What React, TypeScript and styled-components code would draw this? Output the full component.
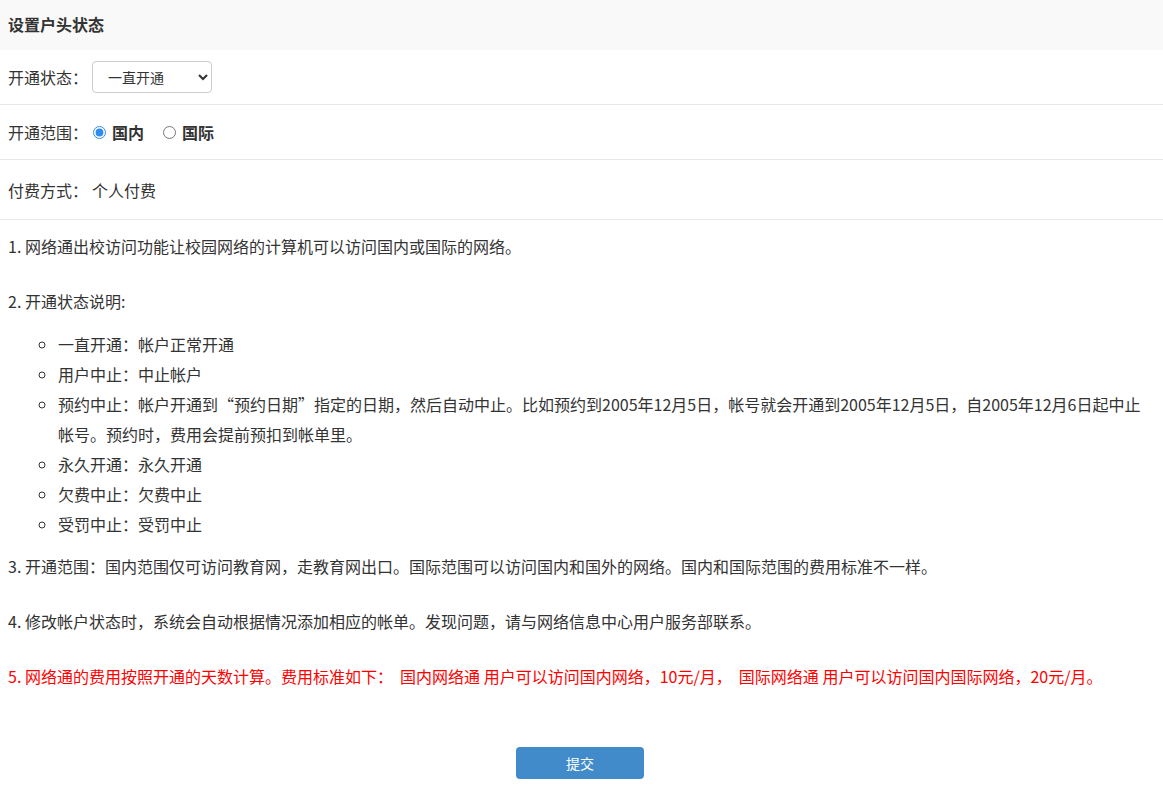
import * as React from 'react';
import styled, { createGlobalStyle } from 'styled-components';

const GlobalStyle = createGlobalStyle`
  html, body {
    margin: 0;
    padding: 0;
    background: #fff;
  }

  body {
    font-family: "Noto Sans CJK SC", "Noto Sans", sans-serif;
    font-size: 16px;
    color: #333;
  }
`;

const statusOptions = ['一直开通', '用户中止', '预约中止', '永久开通'];

const statusNotes = [
  '一直开通：帐户正常开通',
  '用户中止：中止帐户',
  '预约中止：帐户开通到“预约日期”指定的日期，然后自动中止。比如预约到2005年12月5日，帐号就会开通到2005年12月5日，自2005年12月6日起中止帐号。预约时，费用会提前预扣到帐单里。',
  '永久开通：永久开通',
  '欠费中止：欠费中止',
  '受罚中止：受罚中止',
];

const App: React.FC = () => {
  const [status, setStatus] = React.useState('一直开通');
  const [scope, setScope] = React.useState('domestic');

  return (
    <Page>
      <GlobalStyle />
      <Header>设置户头状态</Header>

      <FieldRow height={54}>
        <Label>开通状态：</Label>
        <Select value={status} onChange={(e) => setStatus(e.target.value)}>
          {statusOptions.map((opt) => (
            <option key={opt} value={opt}>
              {opt}
            </option>
          ))}
        </Select>
      </FieldRow>

      <FieldRow height={54}>
        <Label>开通范围：</Label>
        <RadioLabel>
          <Radio
            type="radio"
            name="scope"
            checked={scope === 'domestic'}
            onChange={() => setScope('domestic')}
          />
          国内
        </RadioLabel>
        <RadioLabel>
          <Radio
            type="radio"
            name="scope"
            checked={scope === 'intl'}
            onChange={() => setScope('intl')}
          />
          国际
        </RadioLabel>
      </FieldRow>

      <FieldRow height={59}>
        <Label>付费方式：</Label>
        <Value>个人付费</Value>
      </FieldRow>

      <Notes>
        <Para>1. 网络通出校访问功能让校园网络的计算机可以访问国内或国际的网络。</Para>
        <Para>2. 开通状态说明:</Para>
        <NoteList>
          {statusNotes.map((note) => (
            <li key={note}>{note}</li>
          ))}
        </NoteList>
        <Para>3. 开通范围：国内范围仅可访问教育网，走教育网出口。国际范围可以访问国内和国外的网络。国内和国际范围的费用标准不一样。</Para>
        <Para>4. 修改帐户状态时，系统会自动根据情况添加相应的帐单。发现问题，请与网络信息中心用户服务部联系。</Para>
        <Para warn>
          5. 网络通的费用按照开通的天数计算。费用标准如下：&nbsp; 国内网络通 用户可以访问国内网络，10元/月，&nbsp; 国际网络通 用户可以访问国内国际网络，20元/月。
        </Para>
      </Notes>

      <Actions>
        <SubmitButton type="button">提交</SubmitButton>
      </Actions>
    </Page>
  );
};

export default App;

const Page = styled.div`
  width: 100%;
  min-height: 793px;
`;

const Header = styled.div`
  height: 50px;
  box-sizing: border-box;
  display: flex;
  align-items: center;
  padding: 0 8px 3px;
  background: #f9f9f9;
  font-size: 16px;
  font-weight: bold;
  color: #333;
`;

const FieldRow = styled.div<{ height: number }>`
  display: flex;
  align-items: center;
  height: ${(p) => p.height}px;
  padding: 0 8px;
  border-bottom: 1px solid #e8e8e8;
`;

const Label = styled.span`
  width: 84px;
  flex-shrink: 0;
  white-space: nowrap;
`;

const Value = styled.span`
  color: #333;
`;

const Select = styled.select`
  width: 120px;
  height: 32px;
  padding: 0 6px 0 11px;
  border: 1px solid #ccc;
  border-radius: 4px;
  background: #fff;
  font-family: "Noto Sans CJK SC", sans-serif;
  font-size: 14px;
  color: #333;
  outline: none;
`;

const RadioLabel = styled.label`
  display: inline-flex;
  align-items: center;
  margin-right: 18px;
  font-size: 16px;
  font-weight: bold;
  color: #333;
  cursor: pointer;
`;

const Radio = styled.input`
  width: 13px;
  height: 13px;
  margin: 0 6px 0 1px;
  accent-color: #2f8cf0;
`;

const Notes = styled.div`
  padding: 11px 8px 0;
`;

const Para = styled.p<{ warn?: boolean }>`
  margin: 0 0 25px;
  line-height: 30px;
  color: ${(p) => (p.warn ? '#ff0000' : '#333')};
`;

const NoteList = styled.ul`
  list-style: circle;
  margin: -12px 0 12px;
  padding-left: 50px;
  line-height: 30px;
`;

const Actions = styled.div`
  display: flex;
  justify-content: center;
  padding: 31px 3px 0 0;
`;

const SubmitButton = styled.button`
  width: 128px;
  height: 32px;
  border: none;
  border-radius: 4px;
  background: #428bca;
  color: #fff;
  font-family: "Noto Sans CJK SC", sans-serif;
  font-size: 14px;
  cursor: pointer;
`;
